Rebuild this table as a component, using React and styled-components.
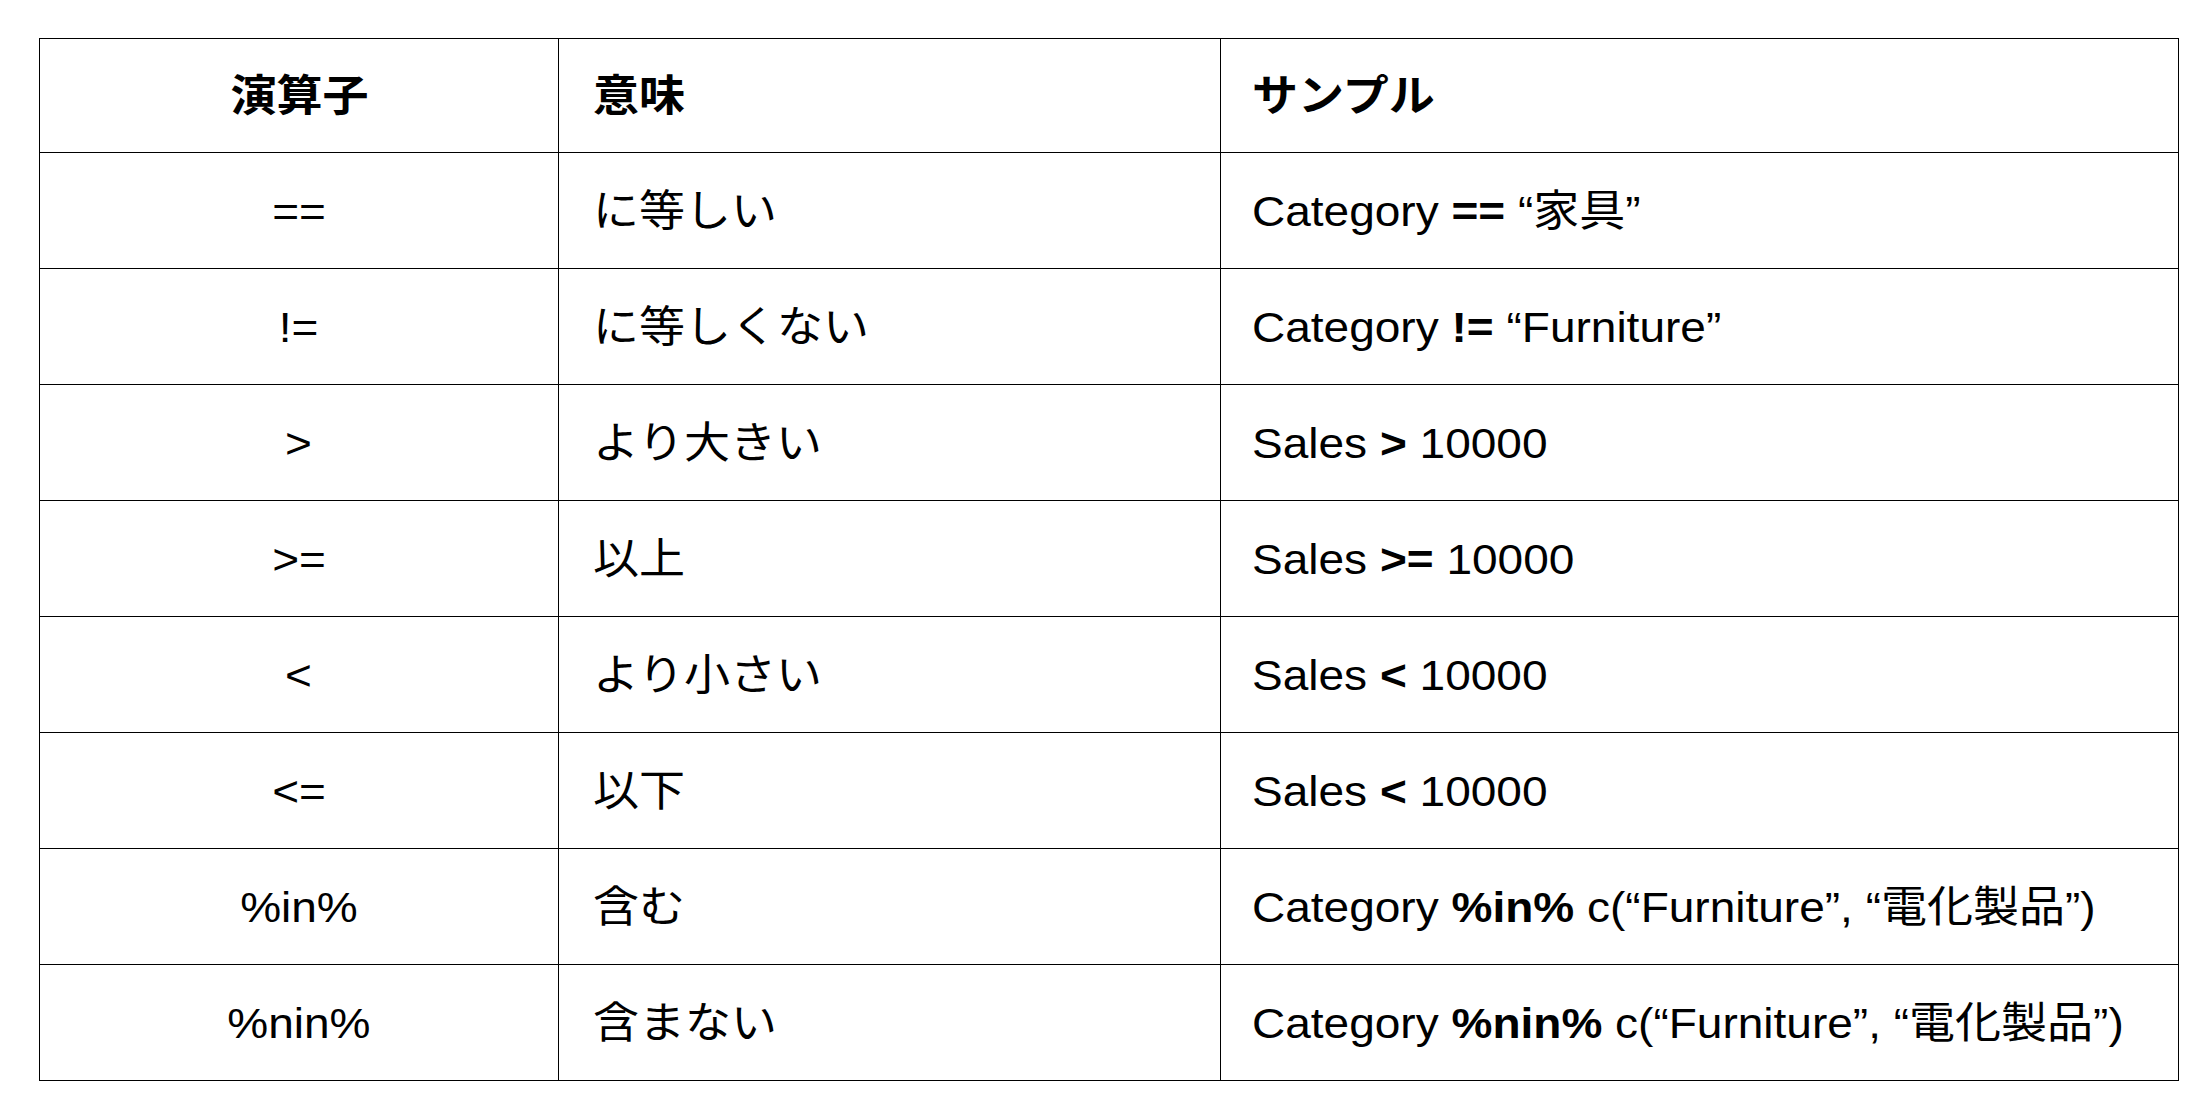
import React from 'react';
import styled, { createGlobalStyle } from 'styled-components';

const GlobalStyle = createGlobalStyle`
    body {
        margin: 0;
        background: #fff;
        font-family: "Liberation Sans", "Noto Sans CJK JP", sans-serif;
        color: #000;
    }
`

const rows = [
    { op: '==', meaning: 'に等しい', sample: ['Category ', <b key="b">==</b>, ' “家具”'] },
    { op: '!=', meaning: 'に等しくない', sample: ['Category ', <b key="b">!=</b>, ' “Furniture”'] },
    { op: '>', meaning: 'より大きい', sample: ['Sales ', <b key="b">&gt;</b>, ' 10000'] },
    { op: '>=', meaning: '以上', sample: ['Sales ', <b key="b">&gt;=</b>, ' 10000'] },
    { op: '<', meaning: 'より小さい', sample: ['Sales ', <b key="b">&lt;</b>, ' 10000'] },
    { op: '<=', meaning: '以下', sample: ['Sales ', <b key="b">&lt;</b>, ' 10000'] },
    { op: '%in%', meaning: '含む', sample: ['Category ', <b key="b">%in%</b>, ' c(“Furniture”, “電化製品”)'] },
    { op: '%nin%', meaning: '含まない', sample: ['Category ', <b key="b">%nin%</b>, ' c(“Furniture”, “電化製品”)'] },
];

function App() {
    return (
        <Page>
            <GlobalStyle />
            <Table>
                <Cell $center $head><Text $center>演算子</Text></Cell>
                <Cell $head><Text>意味</Text></Cell>
                <Cell $head $sample><Text>サンプル</Text></Cell>
                {rows.map((r) => (
                    <React.Fragment key={r.op}>
                        <Cell $center><Text $center>{r.op}</Text></Cell>
                        <Cell><Text>{r.meaning}</Text></Cell>
                        <Cell $sample><Text>{r.sample}</Text></Cell>
                    </React.Fragment>
                ))}
            </Table>
        </Page>
    )
};

const Page = styled.div`
    padding: 38px 0 0 39px;
`

const Table = styled.div`
    display: grid;
    grid-template-columns: 519px 662px 958px;
    grid-template-rows: 114px repeat(8, 116px);
    width: 2140px;
    box-sizing: border-box;
    border-top: 1px solid #000;
    border-left: 1px solid #000;
`

const Cell = styled.div`
    display: flex;
    align-items: center;
    justify-content: ${(p) => (p.$center ? 'center' : 'flex-start')};
    box-sizing: border-box;
    border-right: 1px solid #000;
    border-bottom: 1px solid #000;
    padding-left: ${(p) => (p.$center ? '0' : p.$sample ? '31px' : '34px')};
    padding-top: 2px;
    font-size: 43px;
    line-height: 1.2;
    font-weight: ${(p) => (p.$head ? 700 : 400)};
    white-space: nowrap;
    overflow: hidden;
`

const Text = styled.span`
    display: inline-block;
    transform: scaleX(1.07);
    transform-origin: ${(p) => (p.$center ? 'center' : 'left')} center;
    b {
        font-weight: 700;
    }
`

export default App
